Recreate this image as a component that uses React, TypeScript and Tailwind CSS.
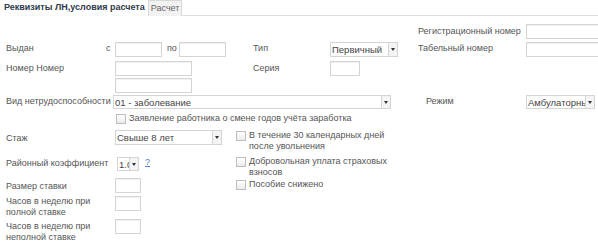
import React from 'react'

const font = "font-['Liberation_Sans',Arial,sans-serif]"

function Input({ w, h = 15 }: { w: number; h?: number }) {
  return (
    <div
      className="shrink-0 border border-[#d4d4d4] bg-white shadow-[inset_0_1px_1px_rgba(0,0,0,0.06)]"
      style={{ width: w, height: h }}
    />
  )
}

function Select({ w, text, h = 15, clip = true }: { w: number; text: string; h?: number; clip?: boolean }) {
  return (
    <div className="flex shrink-0 border border-[#d4d4d4] bg-white" style={{ width: w, height: h }}>
      <div
        className={`min-w-0 flex-1 whitespace-nowrap pl-[1px] text-[9.5px] leading-[13px] text-[#444] ${clip ? 'overflow-hidden' : 'overflow-visible'}`}
      >
        {text}
      </div>
      <div className="relative flex w-[9px] shrink-0 items-center justify-center border-l border-[#d4d4d4] bg-[#f4f4f4]">
        <div className="h-0 w-0 border-x-[2.5px] border-t-[3px] border-x-transparent border-t-[#333]" />
      </div>
    </div>
  )
}

function Check({ label }: { label: React.ReactNode }) {
  return (
    <div className="flex items-start gap-[3px]">
      <div className="mt-[1px] h-[10px] w-[10px] shrink-0 border border-[#bdbdbd] bg-gradient-to-b from-white to-[#ececec]" />
      <div className="whitespace-nowrap leading-[11px]">{label}</div>
    </div>
  )
}

export default function App() {
  return (
    <div className={`${font} h-[246px] w-[598px] overflow-hidden whitespace-nowrap bg-white text-[9px] text-[#555]`}>
      {/* вкладки */}
      <div className="flex h-[16px] items-end">
        <div className="pl-[4px] pr-[3px] pb-[2px] text-[9px] font-bold text-[#2f3b4c]">Реквизиты ЛН,условия расчета</div>
        <div className="h-[16px] border border-b-0 border-[#d8d8d8] bg-[#f2f2f2] px-[2px] leading-[15px] text-[#666]">Расчет</div>
        <div className="flex-1 border-b border-[#dedede]" />
      </div>

      {/* рег. номер */}
      <div className="mt-[8px] flex h-[15px] items-center">
        <div className="w-[418px] shrink-0" />
        <div className="w-[108px] shrink-0">Регистрационный номер</div>
        <Input w={80} />
      </div>

      {/* выдан */}
      <div className="mt-[2px] flex h-[16px] items-center">
        <div className="w-[100px] shrink-0 pl-[6px]">Выдан</div>
        <div className="w-[15px] shrink-0 pl-[6px]">с</div>
        <Input w={47} />
        <div className="w-[17px] shrink-0 pl-[5px]">по</div>
        <Input w={47} />
        <div className="w-[27px] shrink-0" />
        <div className="w-[77px] shrink-0">Тип</div>
        <Select w={68} text="Первичный" />
        <div className="w-[20px] shrink-0" />
        <div className="w-[108px] shrink-0">Табельный номер</div>
        <Input w={80} />
      </div>

      {/* номер */}
      <div className="mt-[4px] flex h-[15px] items-center">
        <div className="w-[115px] shrink-0 pl-[6px]">Номер Номер</div>
        <Input w={77} />
        <div className="w-[61px] shrink-0" />
        <div className="w-[77px] shrink-0">Серия</div>
        <Input w={30} />
      </div>
      <div className="mt-[2px] flex h-[15px]">
        <div className="w-[115px] shrink-0" />
        <Input w={77} />
      </div>

      {/* вид */}
      <div className="mt-[2px] flex h-[14px] items-center">
        <div className="w-[113px] shrink-0 pl-[6px]">Вид нетрудоспособности</div>
        <Select w={278} h={14} text="01 - заболевание" />
        <div className="w-[35px] shrink-0" />
        <div className="w-[100px] shrink-0">Режим</div>
        <Select w={69} h={14} text="Амбулаторный" clip={false} />
      </div>

      <div className="mt-[4px] flex h-[13px]">
        <div className="w-[116px] shrink-0" />
        <Check label="Заявление работника о смене годов учёта заработка" />
      </div>

      {/* стаж */}
      <div className="mt-[4px] flex h-[22px]">
        <div className="w-[115px] shrink-0 pl-[6px] pt-[2px]">Стаж</div>
        <Select w={107} text="Свыше 8 лет" />
        <div className="w-[14px] shrink-0" />
        <Check label={<>В течение 30 календарных дней<br />после увольнения</>} />
      </div>

      {/* коэффициент */}
      <div className="mt-[4px] flex h-[22px]">
        <div className="w-[117px] shrink-0 pl-[6px] pt-[1px]">Районный коэффициент</div>
        <div className="mt-[1px]">
          <Select w={22} text="1.00" h={14} />
        </div>
        <div className="w-[19px] shrink-0 pl-[6px] text-[#4a7dc0] underline">?</div>
        <div className="w-[78px] shrink-0" />
        <Check label={<>Добровольная уплата страховых<br />взносов</>} />
      </div>

      {/* ставка */}
      <div className="flex h-[18px]">
        <div className="w-[115px] shrink-0 pl-[6px] pt-[2px]">Размер ставки</div>
        <Input w={26} h={15} />
        <div className="w-[95px] shrink-0" />
        <div className="pt-[1px]">
          <Check label="Пособие снижено" />
        </div>
      </div>

      <div className="flex h-[23px]">
        <div className="w-[115px] shrink-0 pl-[6px] leading-[11px]">Часов в неделю при<br />полной ставке</div>
        <Input w={26} h={15} />
      </div>

      <div className="flex h-[25px]">
        <div className="w-[115px] shrink-0 pl-[6px] pt-[2px] leading-[11px]">Часов в неделю при<br />неполной ставке</div>
        <Input w={26} h={15} />
      </div>
    </div>
  )
}
